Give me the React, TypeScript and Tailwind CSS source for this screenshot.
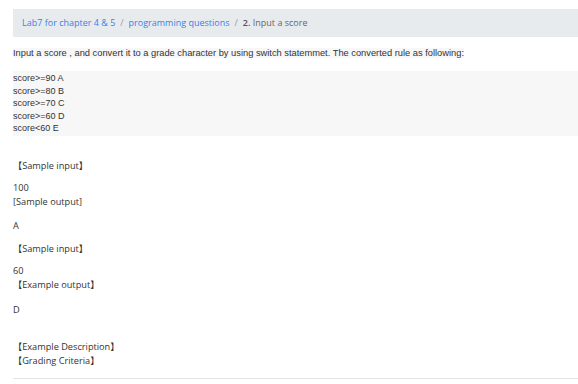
const cjk = { fontFamily: '"Open Sans", "Noto Sans CJK SC", sans-serif' };

function Line({ children, mt }: { children: React.ReactNode; mt: string }) {
  return (
    <div className={`${mt} h-[12px] leading-[12px] text-[9.2px] text-[#333]`} style={cjk}>
      {children}
    </div>
  );
}

export default function App() {
  return (
    <div className="w-[578px] h-[384px] bg-white pl-[13px] pt-[9px] overflow-hidden">
      <div
        className="h-[28px] bg-[#e8ebee] flex items-center pl-[9px] text-[9px] gap-[5px]"
        style={cjk}
      >
        <span className="text-[#3d7ee8]">Lab7 for chapter 4 &amp; 5</span>
        <span className="text-[#999]">/</span>
        <span className="text-[#3d7ee8]">programming questions</span>
        <span className="text-[#999]">/</span>
        <span className="text-[#666]">
          <span className="font-semibold text-[#555]">2.</span> Input a score
        </span>
      </div>

      <div
        className="mt-[10px] h-[12px] leading-[12px] text-[9.3px] text-[#333]"
        style={{ fontFamily: '"Liberation Sans", Arial, sans-serif' }}
      >
        <span className="bg-[#f7f7f7]">
          Input a score , and convert it to a grade character by using switch statemmet. The
          converted rule as following:
        </span>
      </div>

      <div
        className="mt-[12px] h-[65px] bg-[#f7f7f7] pt-[1px] text-[9px] leading-[12.6px] text-[#333]"
        style={{ fontFamily: '"Liberation Sans", Arial, sans-serif' }}
      >
        <div>score&gt;=90 A</div>
        <div>score&gt;=80 B</div>
        <div>score&gt;=70 C</div>
        <div>score&gt;=60 D</div>
        <div>score&lt;60 E</div>
      </div>

      <Line mt="mt-[24px]">【Sample input】</Line>
      <Line mt="mt-[10px]">100</Line>
      <Line mt="mt-[2px]">[Sample output]</Line>
      <Line mt="mt-[12px]">A</Line>
      <Line mt="mt-[11px]">【Sample input】</Line>
      <Line mt="mt-[10px]">60</Line>
      <Line mt="mt-[2px]">【Example output】</Line>
      <Line mt="mt-[13px]">D</Line>
      <Line mt="mt-[25px]">【Example Description】</Line>
      <Line mt="mt-[2px]">【Grading Criteria】</Line>

      <div className="mt-[11px] h-px bg-[#e4e4e4]" />
    </div>
  );
}
